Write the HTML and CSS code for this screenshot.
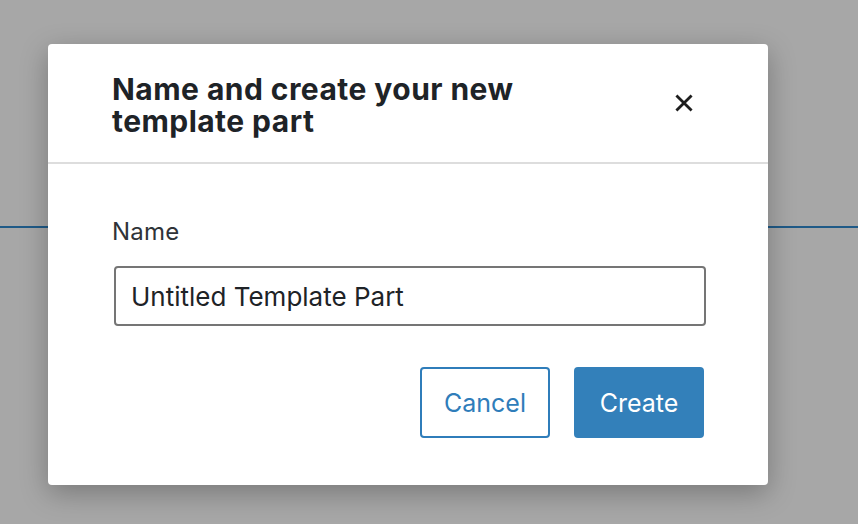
FILE: index.html
```html
<!DOCTYPE html>
<html lang="en">
<head>
<meta charset="utf-8">
<title>Create template part</title>
<link rel="stylesheet" href="styles.css">
</head>
<body>
<div class="backdrop">
  <div class="editor-rule"></div>
</div>
<div class="modal" role="dialog" aria-labelledby="modal-title">
  <div class="modal-header">
    <h1 class="modal-title" id="modal-title">Name and create your new template part</h1>
    <button class="close-btn" type="button" aria-label="Close">
      <svg viewBox="0 0 24 24" width="28" height="28" aria-hidden="true"><path d="M5.5 5.5 L18.5 18.5 M18.5 5.5 L5.5 18.5" stroke="#1e1e1e" stroke-width="2.4" fill="none"/></svg>
    </button>
  </div>
  <div class="modal-body">
    <label class="field-label" for="name">Name</label>
    <input class="field-input" id="name" type="text" value="Untitled Template Part">
    <div class="actions">
      <button class="btn btn-secondary" type="button">Cancel</button>
      <button class="btn btn-primary" type="button">Create</button>
    </div>
  </div>
</div>
</body>
</html>
```
FILE: styles.css
```css
* { box-sizing: border-box; }
html, body { margin: 0; padding: 0; }
body {
  background: #a7a7a7;
  width: 858px;
  height: 524px;
  overflow: hidden;
  font-family: Inter, "Noto Sans", "Liberation Sans", sans-serif;
}
.backdrop {
  padding-top: 226px;
}
.editor-rule {
  height: 2px;
  background: #1f5a87;
}
.modal {
  position: absolute;
  left: 48px;
  top: 44px;
  width: 720px;
  height: 441px;
  background: #fff;
  border-radius: 4px;
  box-shadow: 0 8px 28px rgba(0, 0, 0, 0.28);
  display: flex;
  flex-direction: column;
}
.modal-header {
  height: 120px;
  flex: none;
  display: flex;
  align-items: center;
  justify-content: space-between;
  padding: 0 64px;
  border-bottom: 2px solid #dddddd;
}
.modal-title {
  margin: 3px 0 0;
  font-size: 30px;
  line-height: 32px;
  font-weight: 700;
  color: #1e2327;
  width: 450px;
  letter-spacing: 0.45px;
}
.close-btn {
  width: 40px;
  height: 40px;
  padding: 0;
  border: 0;
  background: transparent;
  display: flex;
  align-items: center;
  justify-content: center;
}
.modal-body {
  padding: 53px 64px 0;
  display: flex;
  flex-direction: column;
}
.field-label {
  font-size: 24px;
  line-height: 30px;
  letter-spacing: 0.2px;
  color: #2f3338;
  margin-bottom: 19px;
}
.field-input {
  height: 60px;
  width: 592px;
  border: 2px solid #757575;
  border-radius: 4px;
  padding: 0 15px;
  font-family: inherit;
  font-size: 26px;
  color: #1e2327;
  background: #fff;
  margin: 0 0 0 2px;
}
.actions {
  display: flex;
  justify-content: flex-end;
  gap: 24px;
  margin-top: 41px;
}
.btn {
  width: 130px;
  height: 71px;
  border-radius: 4px;
  font-family: inherit;
  font-size: 25px;
  padding: 0;
}
.btn-secondary {
  background: #fff;
  color: #2f7dba;
  border: 2px solid #2f7dba;
}
.btn-primary {
  background: #3380ba;
  color: #fff;
  border: 0;
}
```
